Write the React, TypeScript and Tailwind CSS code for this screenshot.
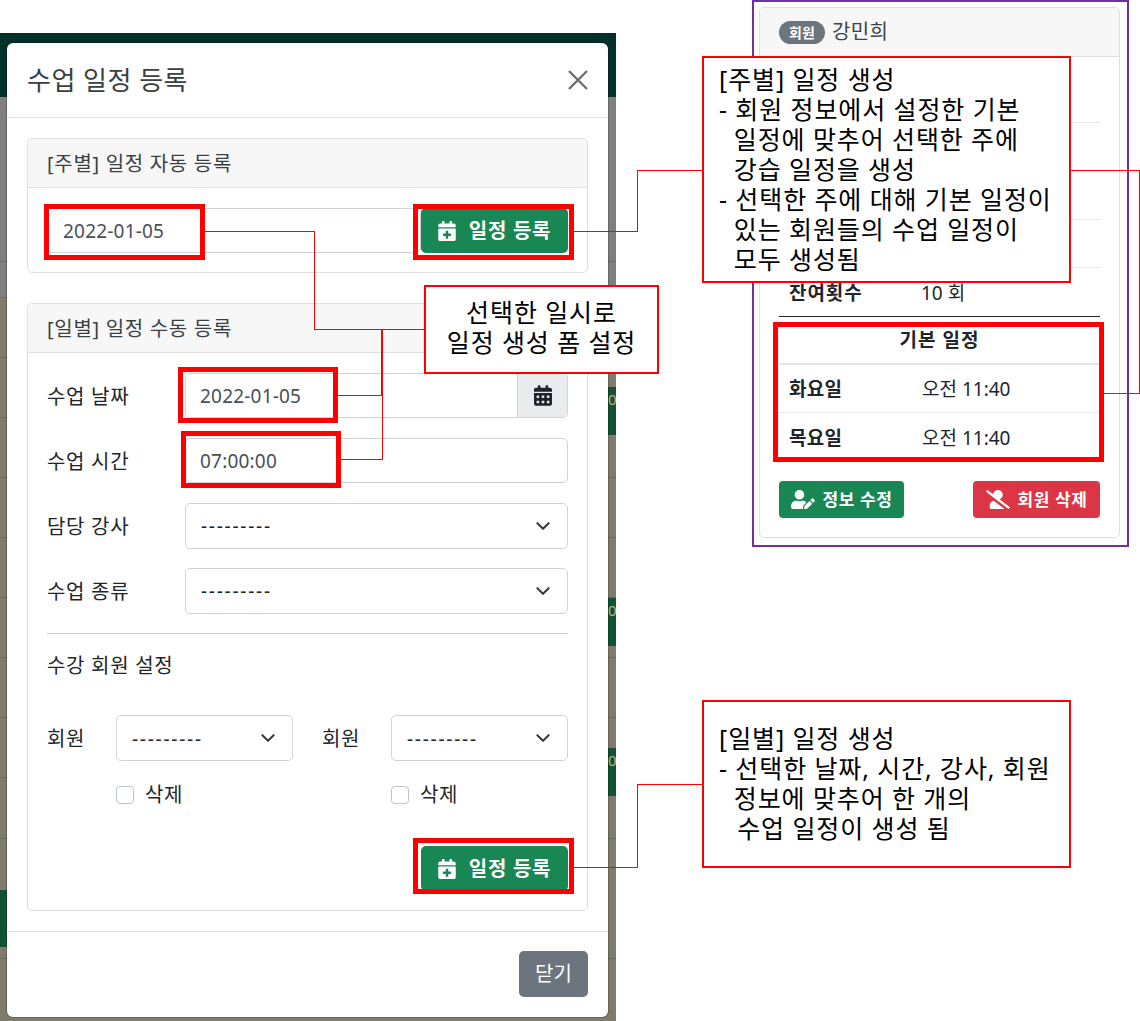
import { FaCalendarPlus, FaCalendarAlt, FaUserEdit, FaUserSlash } from "react-icons/fa";

const font = { fontFamily: '"Noto Sans", "Noto Sans CJK KR", sans-serif' };

function Chevron() {
  return (
    <svg viewBox="0 0 16 16" className="w-[18px] h-[18px] shrink-0" fill="none" stroke="#343a40" strokeWidth="1.8" strokeLinecap="round" strokeLinejoin="round">
      <path d="m3 5.5 5 5 5-5" />
    </svg>
  );
}

function Select({ className }: { className: string }) {
  return (
    <div className={`h-[46px] border border-[#ced4da] rounded-[5px] flex items-center justify-between pl-[15px] pr-[15px] text-[19px] text-[#212529] bg-white ${className}`}>
      <span className="leading-none tracking-[1.75px] pt-[2px]">---------</span>
      <Chevron />
    </div>
  );
}

function Row({ label, children }: { label: string; children: React.ReactNode }) {
  return (
    <div className="flex items-center h-[45px]">
      <div className="w-[138px] pt-[2px] text-[20px] tracking-[0.7px] text-[#212529]">{label}</div>
      {children}
    </div>
  );
}

function RegisterButton() {
  return (
    <div className="w-[147px] h-[45px] bg-[#198754] rounded-[5px] flex items-center justify-center gap-[13px] text-white font-bold text-[20px] tracking-[0.7px]">
      <FaCalendarPlus className="w-[18px] h-[20px]" />
      <span>일정 등록</span>
    </div>
  );
}

function RedBox({ className }: { className: string }) {
  return <div className={`absolute border-[5px] border-[#ff0000] ${className}`} />;
}

function Member() {
  return (
    <div className="flex flex-col">
      <div className="flex items-center">
        <div className="w-[69px] pt-[2px] text-[20px] tracking-[0.7px] text-[#212529]">회원</div>
        <Select className="w-[177px]" />
      </div>
      <div className="flex items-center ml-[69px] mt-[24px] gap-[11px] text-[20px] tracking-[0.7px] text-[#212529]">
        <div className="w-[18px] h-[18px] border border-[#bfc4c9] rounded-[4px] bg-white" />
        <span className="leading-[20px]">삭제</span>
      </div>
    </div>
  );
}

function Backdrop() {
  return (
    <div className="absolute left-0 top-[33px] w-[616px] h-[988px] overflow-hidden bg-[#7f7c6c]">
      <div className="h-[64px] bg-[#04302a]" />
      <div className="h-[200px] bg-[#7f7f7f]" />
      {[261, 297, 357, 417, 477, 537, 597, 657, 717, 777, 838, 958].map((y) => (
        <div key={y} className="absolute left-0 right-0 h-px bg-[#6b6a5e]" style={{ top: y - 33 }} />
      ))}
      {[387, 598, 748].map((y) => (
        <div key={y} className="absolute left-[608px] w-[8px] h-[48px] bg-[#115233] text-[15px] leading-[24px] text-[#c9b26a] overflow-hidden" style={{ top: y - 33 }}>
          0
        </div>
      ))}
      <div className="absolute left-0 top-[857px] w-[7px] h-[57px] bg-[#115233]" />
    </div>
  );
}

function Modal() {
  return (
    <div className="absolute left-[7px] top-[43px] w-[601px] h-[974px] bg-white rounded-[6px] shadow-[0_0_0_1px_rgba(0,0,0,0.2)]">
      <div className="h-[75px] border-b border-[#dee2e6] flex items-center justify-between pl-[20px] pr-[18px]">
        <h5 className="text-[26px] tracking-[0.5px] text-[#3a3f44]">수업 일정 등록</h5>
        <svg viewBox="0 0 24 24" className="w-[24px] h-[24px]" stroke="#6f6f6f" strokeWidth="2.4" fill="none">
          <path d="M3 3 L21 21 M21 3 L3 21" />
        </svg>
      </div>

      <div className="p-[20px] flex flex-col gap-[30px]">
        {/* weekly */}
        <div className="h-[135px] border border-[#dfdfdf] rounded-[5px]">
          <div className="h-[49px] pt-[2px] bg-[#f7f7f7] border-b border-[#dfdfdf] rounded-t-[5px] flex items-center px-[19px] text-[20px] tracking-[0.7px] text-[#3a3f44]">
            [주별] 일정 자동 등록
          </div>
          <div className="flex justify-between px-[19px] pt-[20px]">
            <div className="w-[374px] h-[45px] pt-[2px] border border-[#ced4da] rounded-[5px] flex items-center pl-[15px] text-[19px] tracking-[0.2px] text-[#495057]">
              2022-01-05
            </div>
            <RegisterButton />
          </div>
        </div>

        {/* daily */}
        <div className="h-[608px] border border-[#dfdfdf] rounded-[5px]">
          <div className="h-[49px] pt-[2px] bg-[#f7f7f7] border-b border-[#dfdfdf] rounded-t-[5px] flex items-center px-[19px] text-[20px] tracking-[0.7px] text-[#3a3f44]">
            [일별] 일정 수동 등록
          </div>
          <div className="px-[19px] pt-[20px] flex flex-col">
            <div className="flex flex-col gap-[20px]">
              <Row label="수업 날짜">
                <div className="w-[383px] h-[45px] border border-[#ced4da] rounded-[5px] flex items-center justify-between pl-[14px] text-[19px] tracking-[0.2px] text-[#495057]">
                  <span className="pt-[2px]">2022-01-05</span>
                  <div className="w-[50px] h-full bg-[#e9ecef] border-l border-[#ced4da] rounded-r-[5px] flex items-center justify-center">
                    <FaCalendarAlt className="w-[18px] h-[21px] text-[#212529]" />
                  </div>
                </div>
              </Row>
              <Row label="수업 시간">
                <div className="w-[383px] h-[45px] pt-[2px] border border-[#ced4da] rounded-[5px] flex items-center pl-[14px] text-[19px] tracking-[0.2px] text-[#495057]">
                  07:00:00
                </div>
              </Row>
              <Row label="담당 강사">
                <Select className="w-[383px]" />
              </Row>
              <Row label="수업 종류">
                <Select className="w-[383px]" />
              </Row>
            </div>
            <div className="mt-[20px] h-px bg-[#c8cacc]" />
            <div className="mt-[19px] h-[26px] leading-[26px] text-[20px] tracking-[0.7px] text-[#212529]">수강 회원 설정</div>
            <div className="mt-[36px] flex justify-between">
              <Member />
              <Member />
            </div>
            <div className="mt-[41px] flex justify-end">
              <RegisterButton />
            </div>
          </div>
        </div>
      </div>

      <div className="border-t border-[#dee2e6] pt-[19px] pr-[20px] flex justify-end">
        <div className="w-[69px] h-[46px] bg-[#6c757d] rounded-[5px] flex items-center justify-center text-white text-[20px]">닫기</div>
      </div>
    </div>
  );
}

function MemberCard() {
  return (
    <div className="absolute left-[752px] top-0 w-[377px] h-[547px] border-2 border-[#7030a0] pl-[5px] pt-[5px]">
      <div className="w-[361px] h-[531px] border border-[#dfdfdf] rounded-[5px] text-[#212529]">
        <div className="h-[49px] bg-[#f7f7f7] border-b border-[#dfdfdf] rounded-t-[5px] flex items-center pl-[19px] gap-[7px]">
          <span className="w-[46px] h-[23px] rounded-full bg-[#6c757d] text-white text-[14px] font-bold flex items-center justify-center">회원</span>
          <span className="text-[20px] tracking-[0.3px] leading-[24px] text-[#3c4146]">강민희</span>
        </div>
        <div className="px-[19px] pt-[17px]">
          <div className="flex flex-col">
            {[0, 1, 2, 3].map((i) => (
              <div key={i} className="h-[48.5px] border-b border-[#e3e6ea]" />
            ))}
          </div>
          <div className="h-[48px] pt-[2px] flex items-center pl-[10px] text-[19px]">
            <span className="w-[132px] font-bold tracking-[0.9px]">잔여횟수</span>
            <span>10 회</span>
          </div>
          <div className="h-px bg-[#212529]" />
          <div className="h-[48px] flex items-center justify-center text-[19px] tracking-[1px] font-bold border-b-2 border-[#e3e6ea]">기본 일정</div>
          <div className="h-[48px] pt-[2px] flex items-center pl-[10px] text-[19px] border-b border-[#e3e6ea]">
            <span className="w-[133px] font-bold tracking-[0.3px]">화요일</span>
            <span>오전 11:40</span>
          </div>
          <div className="h-[48px] pt-[2px] flex items-center pl-[10px] text-[19px]">
            <span className="w-[133px] font-bold tracking-[0.3px]">목요일</span>
            <span>오전 11:40</span>
          </div>
          <div className="mt-[20px] flex justify-between">
            <div className="w-[125px] h-[37px] bg-[#198754] rounded-[4px] flex items-center justify-center gap-[8px] text-white text-[17px] tracking-[0.6px] font-bold">
              <FaUserEdit className="w-[24px] h-[19px]" />
              <span>정보 수정</span>
            </div>
            <div className="w-[127px] h-[37px] bg-[#dc3545] rounded-[4px] flex items-center justify-center gap-[8px] text-white text-[17px] tracking-[0.6px] font-bold">
              <FaUserSlash className="w-[24px] h-[19px]" />
              <span>회원 삭제</span>
            </div>
          </div>
        </div>
      </div>
    </div>
  );
}

function Connectors() {
  return (
    <svg className="absolute left-0 top-0 w-[1140px] h-[1021px]" viewBox="0 0 1140 1021" fill="none" stroke="#ff0000" strokeWidth="1" shapeRendering="crispEdges">
      <path d="M204 231.5H314.5V329.5H425" />
      <path d="M337 395.5H381.5V329.5" />
      <path d="M340 459.5H382.5V329.5" />
      <path d="M574 231.5H637.5V170.5H703" />
      <path d="M1071 170.5H1139.5V393.5H1104" />
      <path d="M574 867.5H637.5V784.5H703" />
    </svg>
  );
}

function Callout({ className, lines }: { className: string; lines: string[] }) {
  return (
    <div className={`absolute border-2 border-[#ff0000] bg-white text-black text-[25px] tracking-[0.9px] leading-[30px] whitespace-pre ${className}`}>
      {lines.map((l) => (
        <div key={l}>{l}</div>
      ))}
    </div>
  );
}

export default function App() {
  return (
    <div className="relative w-[1140px] h-[1021px] overflow-hidden bg-white" style={font}>
      <Backdrop />
      <Modal />
      <MemberCard />
      <RedBox className="left-[44px] top-[204px] w-[161px] h-[56px]" />
      <RedBox className="left-[413px] top-[204px] w-[161px] h-[56px]" />
      <RedBox className="left-[178px] top-[367px] w-[160px] h-[56px]" />
      <RedBox className="left-[181px] top-[431px] w-[160px] h-[57px]" />
      <RedBox className="left-[413px] top-[838px] w-[161px] h-[56px]" />
      <RedBox className="left-[773px] top-[322px] w-[331px] h-[140px]" />
      <Connectors />
      <Callout
        className="left-[702px] top-[56px] w-[369px] h-[227px] pl-[15px] pt-[6px]"
        lines={["[주별] 일정 생성", "- 회원 정보에서 설정한 기본", "  일정에 맞추어 선택한 주에", "  강습 일정을 생성", "- 선택한 주에 대해 기본 일정이", "  있는 회원들의 수업 일정이", "  모두 생성됨"]}
      />
      <Callout
        className="left-[424px] top-[285px] w-[235px] h-[89px] text-center pt-[10px]"
        lines={["선택한 일시로", "일정 생성 폼 설정"]}
      />
      <Callout
        className="left-[702px] top-[700px] w-[369px] h-[168px] pl-[15px] pt-[21px]"
        lines={["[일별] 일정 생성", "- 선택한 날짜, 시간, 강사, 회원", "  정보에 맞추어 한 개의", "  \u200a수업 일정이 생성 됨"]}
      />
    </div>
  );
}
